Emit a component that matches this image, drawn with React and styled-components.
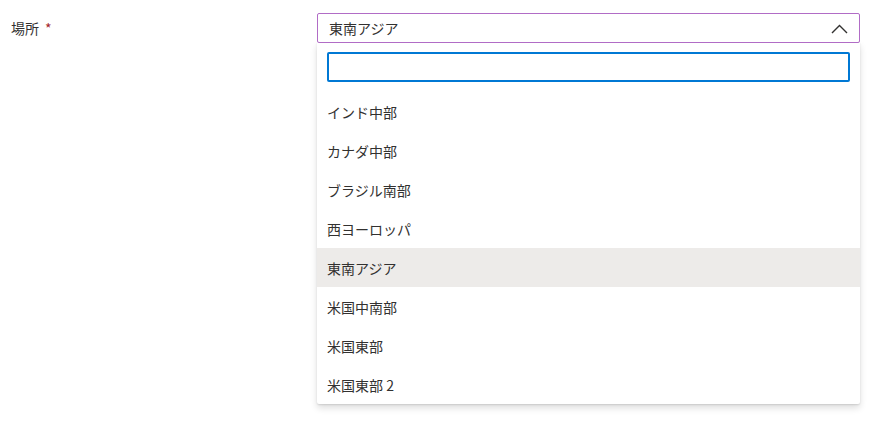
import React from "react";
import styled, { createGlobalStyle } from "styled-components";

const Global = createGlobalStyle`
  html, body { margin: 0; padding: 0; background: #ffffff; }
  body { font-family: "Noto Sans CJK JP", "Noto Sans", sans-serif; color: #323130; }
`;

const Page = styled.div`
  width: 889px;
  height: 429px;
  padding-top: 13px;
  box-sizing: border-box;
  display: flex;
  align-items: flex-start;
`;

const Label = styled.div`
  width: 317px;
  padding-left: 11px;
  box-sizing: border-box;
  height: 30px;
  display: flex;
  align-items: center;
  font-size: 14px;
  color: #323130;
`;

const Required = styled.span`
  color: #a4262c;
  margin-left: 6px;
  font-size: 14px;
`;

const Field = styled.div`
  position: relative;
  width: 543px;
`;

const Combo = styled.div`
  position: relative;
  z-index: 2;
  background: #ffffff;
  height: 30px;
  box-sizing: border-box;
  border: 1px solid #b16cc6;
  border-radius: 2px;
  display: flex;
  align-items: center;
  justify-content: space-between;
  padding: 0 11px 0 11px;
  font-size: 14px;
  color: #323130;
`;

const Chevron = styled.svg`
  width: 17px;
  height: 10px;
  margin-top: 1px;
`;

const Menu = styled.div`
  position: absolute;
  z-index: 1;
  top: 30px;
  left: 0;
  width: 543px;
  background: #ffffff;
  box-shadow: 0 3.2px 7.2px rgba(0, 0, 0, 0.132), 0 0.6px 1.8px rgba(0, 0, 0, 0.108);
  border-radius: 0 0 2px 2px;
  padding-top: 9px;
  box-sizing: border-box;
`;

const Search = styled.div`
  margin: 0 10px 10px 10px;
  height: 30px;
  box-sizing: border-box;
  border: 2px solid #0078d4;
  border-radius: 2px;
`;

const Option = styled.div`
  height: 39px;
  display: flex;
  align-items: center;
  padding-left: 10px;
  font-size: 14px;
  color: #323130;
  background: ${(p) => (p.$selected ? "#edebe9" : "transparent")};
`;

const options = [
  "インド中部",
  "カナダ中部",
  "ブラジル南部",
  "西ヨーロッパ",
  "東南アジア",
  "米国中南部",
  "米国東部",
  "米国東部 2",
];

export default function App() {
  return (
    <>
      <Global />
      <Page>
        <Label>
          場所<Required>*</Required>
        </Label>
        <Field>
          <Combo>
            <span>東南アジア</span>
            <Chevron viewBox="0 0 17 10" fill="none">
              <path d="M1 9 L8.5 1.5 L16 9" stroke="#323130" strokeWidth="1.4" />
            </Chevron>
          </Combo>
          <Menu>
            <Search />
            {options.map((o) => (
              <Option key={o} $selected={o === "東南アジア"}>
                {o}
              </Option>
            ))}
          </Menu>
        </Field>
      </Page>
    </>
  );
}
